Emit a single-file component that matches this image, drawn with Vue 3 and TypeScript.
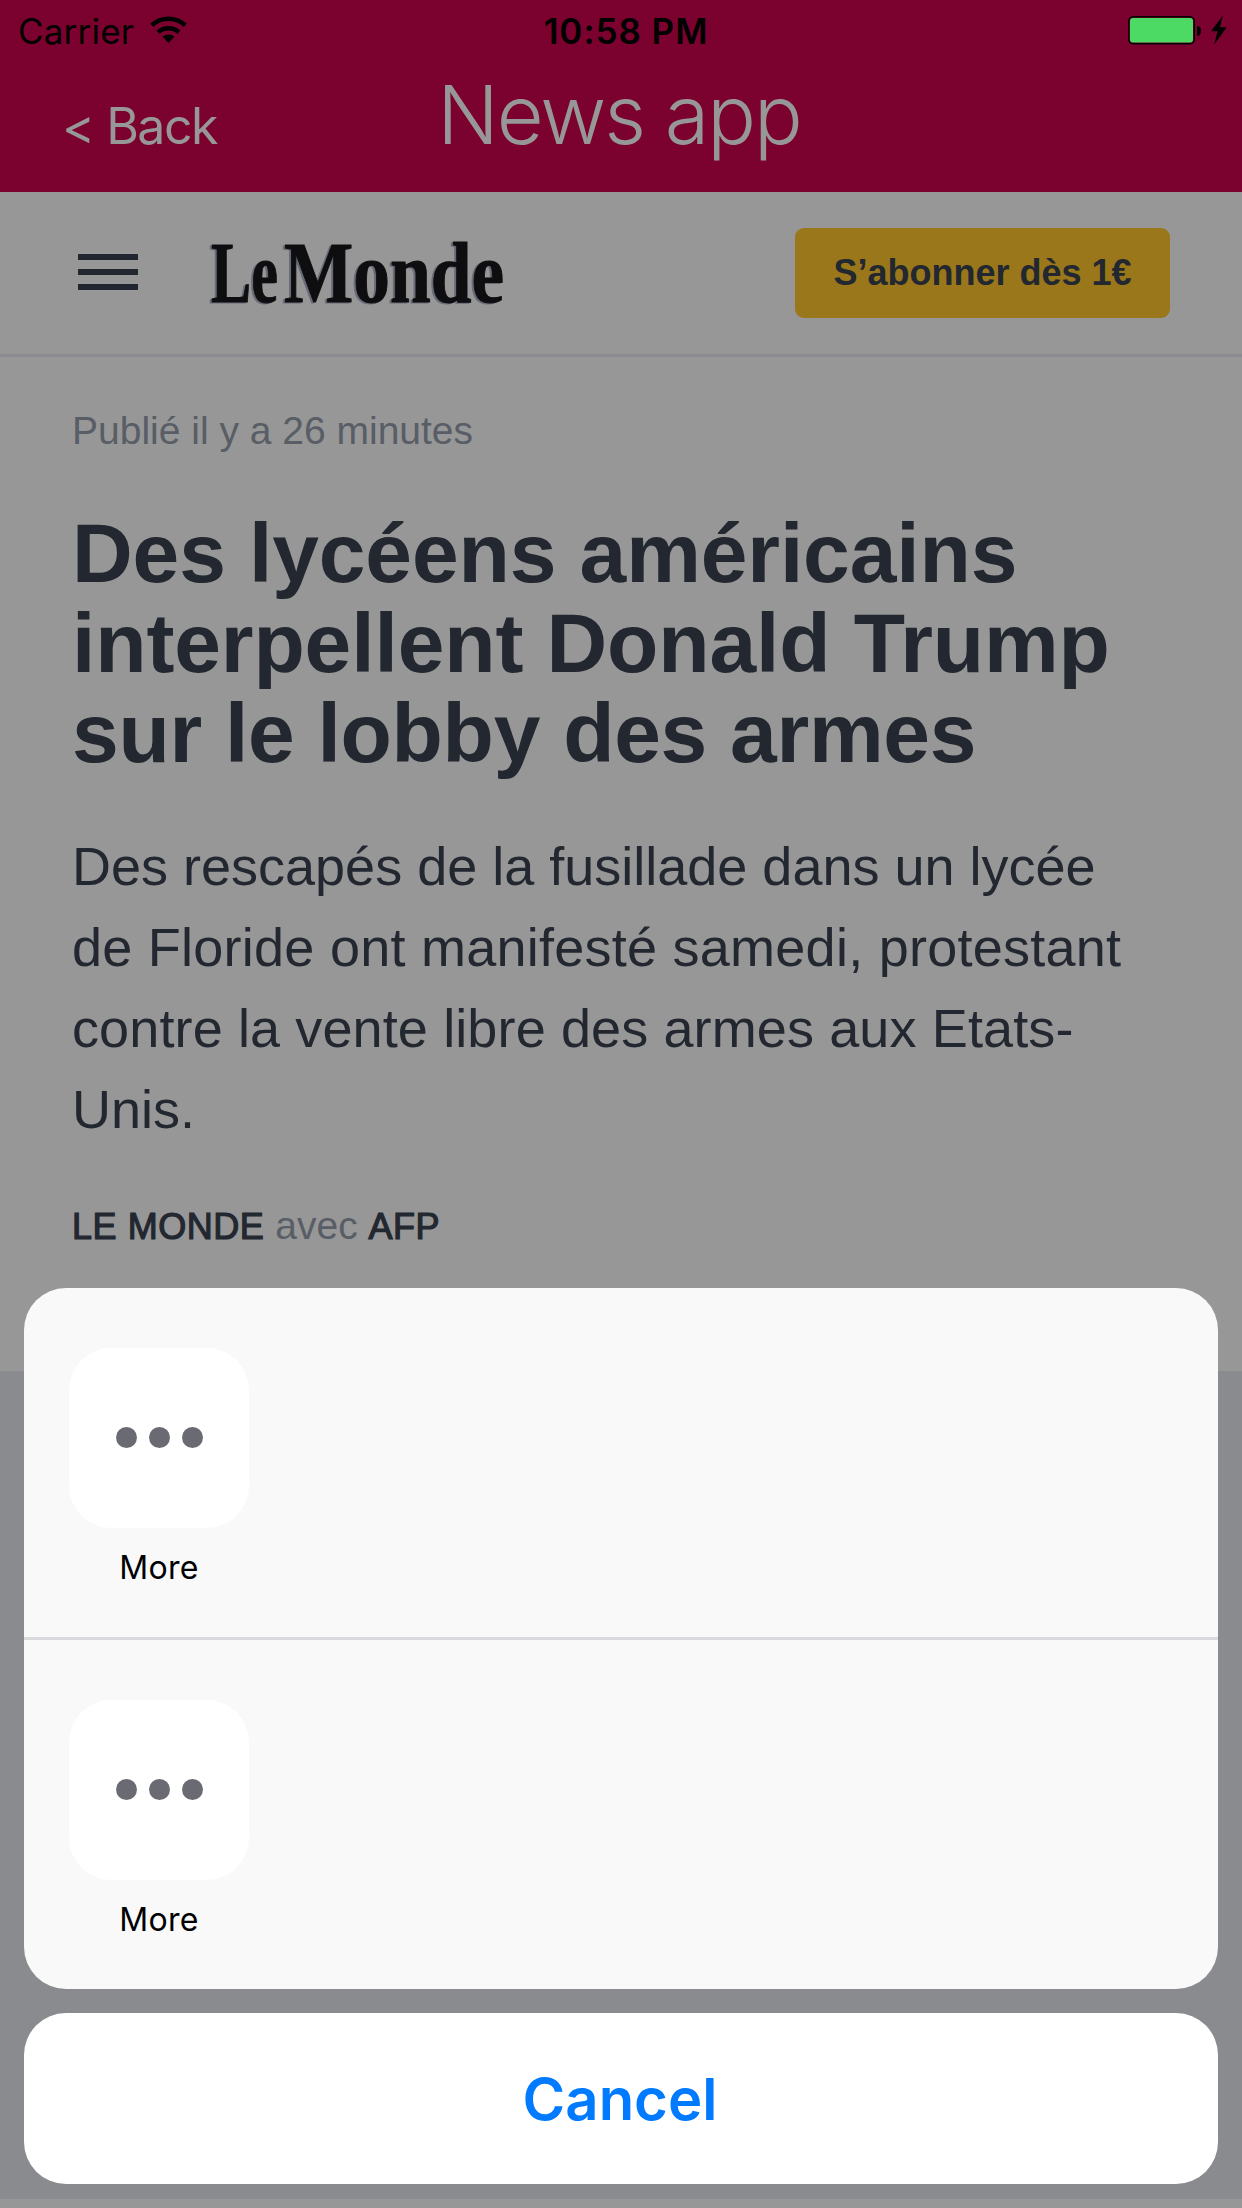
<script setup lang="ts">
interface Activity {
  id: number
  label: string
}

const titleLines: string[] = [
  'Des lycéens américains',
  'interpellent Donald Trump',
  'sur le lobby des armes',
]

const introLines: string[] = [
  'Des rescapés de la fusillade dans un lycée',
  'de Floride ont manifesté samedi, protestant',
  'contre la vente libre des armes aux Etats-',
  'Unis.',
]

const activities: Activity[] = [
  { id: 1, label: 'More' },
  { id: 2, label: 'More' },
]
</script>

<template>
  <div class="screen">
    <header class="top">
      <div class="status">
        <div class="status-left">
          <span class="carrier">Carrier</span>
          <svg class="wifi" width="38" height="28" viewBox="0 0 38 28">
            <path d="M1.8 9.2A25 25 0 0 1 35.2 9.2" fill="none" stroke="#000" stroke-width="4.6" />
            <path d="M8 16.2A16 16 0 0 1 29 16.2" fill="none" stroke="#000" stroke-width="4.6" />
            <path d="M12.5 20.8A9 9 0 0 1 24.5 20.8L18.5 27Z" fill="#000" />
          </svg>
        </div>
        <span class="clock">10:58 PM</span>
        <div class="status-right">
          <svg width="100" height="30" viewBox="0 0 100 30">
            <rect x="0.7" y="1.7" width="65.6" height="27" rx="4.5" fill="none" stroke="#000" stroke-width="1.4" />
            <rect x="2" y="3" width="63" height="24.5" rx="3" fill="#4cd964" />
            <path d="M69 11q4 0 4 5t-4 5z" fill="#000" />
            <path d="M94.8 0.5L83 16.3H89.6L86.2 29.5L98.8 12.2H92z" fill="#000" />
          </svg>
        </div>
      </div>
      <nav class="nav">
        <span class="back">&lt; Back</span>
        <span class="app-title">News app</span>
      </nav>
    </header>

    <div class="site-bar">
      <div class="burger"><i></i><i></i><i></i></div>
      <svg class="logo" width="310" height="116" viewBox="0 0 310 116" role="img" aria-label="Le Monde">
        <text transform="translate(2 87) scale(0.7 1)">Le</text>
        <text transform="translate(75 87) scale(0.853 1)">Monde</text>
      </svg>
      <div class="subscribe">S’abonner dès 1€</div>
    </div>

    <article class="article">
      <p class="date">Publié il y a 26 minutes</p>
      <h1 class="title"><span v-for="line in titleLines" :key="line">{{ line }}</span></h1>
      <p class="intro"><span v-for="line in introLines" :key="line">{{ line }}</span></p>
      <p class="source"><b>LE MONDE</b> avec <b>AFP</b></p>
    </article>
    <div class="media"></div>

    <div class="sheet">
      <div class="activities">
        <section v-for="item in activities" :key="item.id" class="activity-row">
          <div class="activity">
            <div class="tile"><i></i><i></i><i></i></div>
            <span class="label">{{ item.label }}</span>
          </div>
        </section>
      </div>
      <div class="cancel">Cancel</div>
    </div>
  </div>
</template>

<style>
body {
  margin: 0;
}
</style>

<style scoped>
.screen {
  position: relative;
  display: flex;
  flex-direction: column;
  width: 1242px;
  height: 2208px;
  overflow: hidden;
  background: #979797;
  color: #222730;
  font-family: "Liberation Sans", Arial, sans-serif;
  white-space: nowrap;
}

.top {
  height: 192px;
  background: #7b022e;
  font-family: Inter, "Liberation Sans", sans-serif;
}

.status {
  display: grid;
  grid-template-columns: 1fr auto 1fr;
  height: 62px;
  padding: 0 10px 0 20px;
  box-sizing: border-box;
  line-height: 62px;
  font-size: 35px;
  color: #000;
}

.status-left {
  display: flex;
}

.carrier {
  width: 130px;
  margin-left: -2px;
  letter-spacing: 0.2px;
}

.wifi {
  margin: 16px 0 0 2px;
}

.clock {
  font-weight: 600;
  letter-spacing: 0.95px;
}

.status-right {
  display: flex;
  justify-content: flex-end;
  padding-top: 15px;
  margin-right: 4px;
}

.nav {
  display: grid;
  grid-template-columns: 1fr auto 1fr;
  height: 130px;
  padding-right: 4px;
  color: #979797;
}

.back {
  padding-left: 62px;
  font-size: 50px;
  line-height: 129px;
  letter-spacing: -1.5px;
}

.app-title {
  font-size: 81px;
  font-weight: 300;
  line-height: 107px;
  letter-spacing: -2px;
}

.site-bar {
  display: flex;
  height: 165px;
  box-sizing: border-box;
  border-bottom: 3px solid #8a8b8f;
  padding: 0 72px 0 78px;
}

.burger {
  display: flex;
  flex-direction: column;
  gap: 9px;
  width: 60px;
  padding-top: 62px;
}

.burger i {
  height: 6px;
  background: #222630;
}

.logo {
  margin: 23px 0 0 71px;
  fill: #0e0d10;
  stroke: #0e0d10;
  stroke-width: 1px;
  font-family: "Liberation Serif", serif;
  font-weight: 700;
  font-size: 86px;
  filter: drop-shadow(-2px 1px 0 #666b77);
}

.subscribe {
  width: 375px;
  height: 90px;
  margin: 36px 0 0 auto;
  border-radius: 9px;
  background: #99771a;
  font-size: 36px;
  font-weight: 700;
  line-height: 89px;
  text-align: center;
}

.article {
  height: 1014px;
  padding: 50px 72px 0;
  box-sizing: border-box;
}

.article p,
.article h1 {
  margin: 0;
}

.article h1 span,
.article p span {
  display: block;
}

.date {
  font-size: 39px;
  line-height: 47px;
  color: #585d66;
}

.article .title {
  margin-top: 54px;
  font-size: 84px;
  line-height: 90px;
  letter-spacing: -0.12px;
}

.title span:nth-child(3) {
  letter-spacing: -0.28px;
}

.article .intro {
  margin-top: 48px;
  font-size: 54px;
  line-height: 81px;
}

.intro span:nth-child(2) {
  letter-spacing: 0.25px;
}

.intro span:nth-child(3) {
  letter-spacing: 0.12px;
}

.article .source {
  margin-top: 52px;
  font-size: 39px;
  line-height: 48px;
  color: #585d66;
}

.source b {
  font-size: 36px;
  font-weight: 400;
  color: #222730;
  letter-spacing: 0.55px;
  -webkit-text-stroke: 1.2px #222730;
}

.media {
  height: 828px;
  background: #8a8b8f;
}

.sheet {
  position: absolute;
  left: 24px;
  right: 24px;
  bottom: 24px;
  display: flex;
  flex-direction: column;
  gap: 24px;
  font-family: Inter, "Liberation Sans", sans-serif;
}

.activities {
  height: 701px;
  border-radius: 42px;
  background: #f9f9f9;
}

.activity-row {
  height: 349px;
  padding: 60px 45px 0;
  box-sizing: border-box;
}

.activity-row + .activity-row {
  height: 352px;
  border-top: 3px solid #d9d9de;
}

.activity {
  display: flex;
  flex-direction: column;
  align-items: center;
  width: 180px;
}

.tile {
  display: flex;
  align-items: center;
  justify-content: center;
  gap: 12px;
  width: 180px;
  height: 180px;
  padding: 0 0 1px 1px;
  box-sizing: border-box;
  border-radius: 42px;
  background: #fff;
}

.tile i {
  width: 21px;
  height: 21px;
  border-radius: 50%;
  background: #6a6a72;
}

.label {
  margin-top: 20px;
  font-size: 32px;
  line-height: 40px;
  letter-spacing: 0.3px;
  color: #000;
}

.cancel {
  height: 171px;
  padding-right: 2px;
  border-radius: 42px;
  background: #fff;
  font-size: 58px;
  font-weight: 600;
  line-height: 172px;
  text-align: center;
  color: #007aff;
}
</style>
